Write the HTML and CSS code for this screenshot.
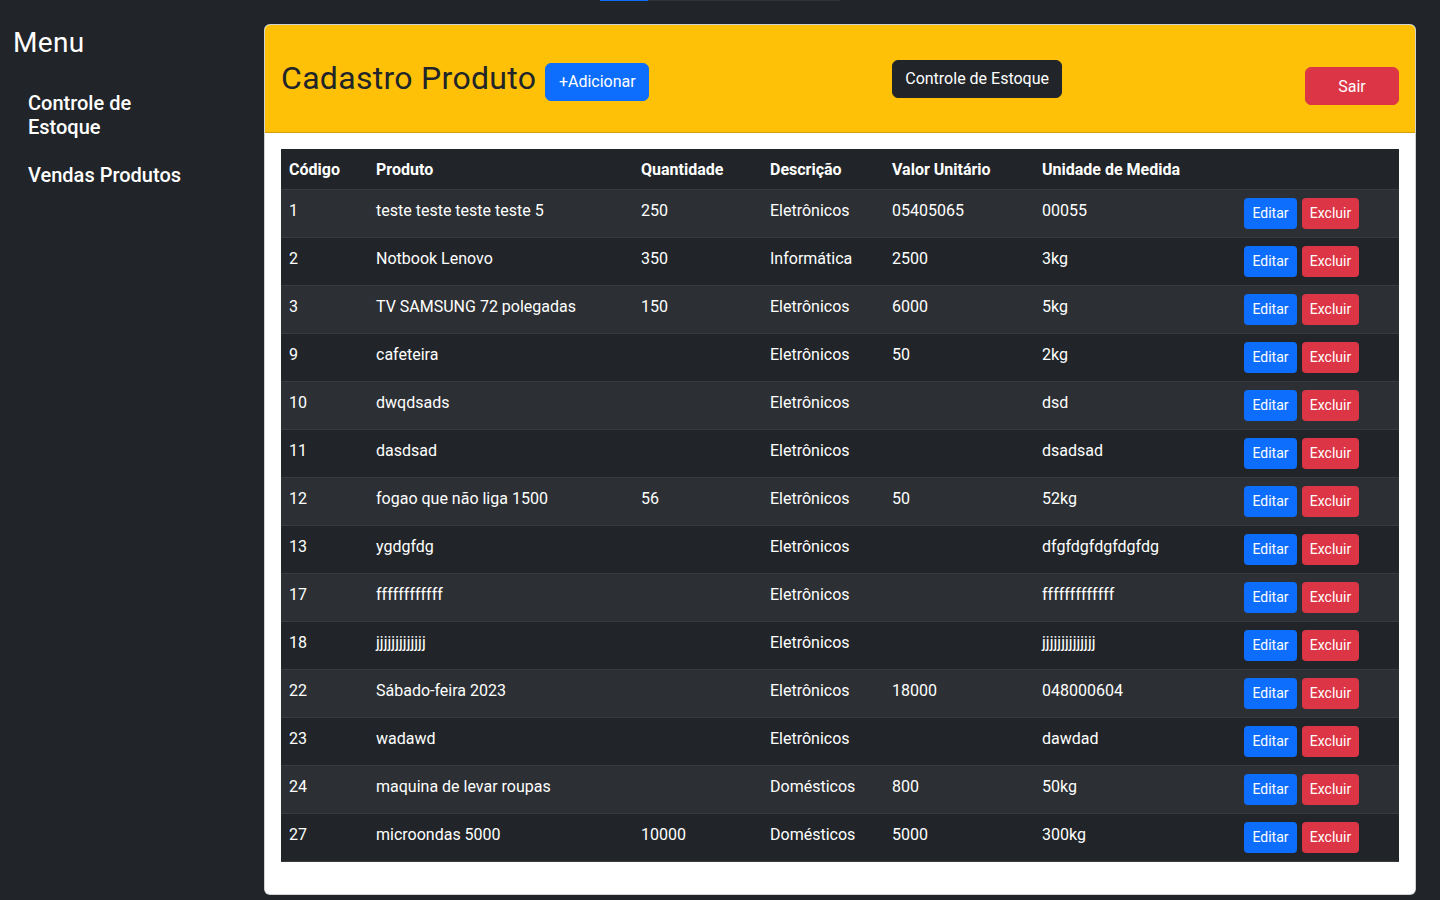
FILE: index.html
```html
<!DOCTYPE html>
<html lang="pt-BR">
<head>
<meta charset="utf-8">
<title>Cadastro Produto</title>
<link rel="stylesheet" href="styles.css">
</head>
<body>
<div class="topline"><span class="tl-blue"></span><span class="tl-grey"></span></div>
<div class="layout">
  <aside class="sidebar">
    <h3 class="menu-title">Menu</h3>
    <ul class="menu-list">
      <li><a class="menu-link" href="#">Controle de Estoque</a></li>
      <li><a class="menu-link" href="#">Vendas Produtos</a></li>
    </ul>
  </aside>
  <main class="main">
    <section class="card">
      <header class="card-header">
        <div class="title-group">
          <h2 class="page-title">Cadastro Produto</h2>
          <button class="btn btn-primary btn-add">+Adicionar</button>
        </div>
        <button class="btn btn-dark btn-stock">Controle de Estoque</button>
        <button class="btn btn-danger btn-exit">Sair</button>
      </header>
      <div class="card-body">
        <table class="table">
          <colgroup>
            <col class="c-cod"><col class="c-prod"><col class="c-qtd"><col class="c-desc"><col class="c-val"><col class="c-un"><col class="c-act">
          </colgroup>
          <thead>
            <tr><th>Código</th><th>Produto</th><th>Quantidade</th><th>Descrição</th><th>Valor Unitário</th><th>Unidade de Medida</th><th></th></tr>
          </thead>
          <tbody>
            <tr><td>1</td><td>teste teste teste teste 5</td><td>250</td><td>Eletrônicos</td><td>05405065</td><td>00055</td><td class="actions"><button class="btn-sm btn-primary btn-edit">Editar</button><button class="btn-sm btn-danger btn-del">Excluir</button></td></tr>
            <tr><td>2</td><td>Notbook Lenovo</td><td>350</td><td>Informática</td><td>2500</td><td>3kg</td><td class="actions"><button class="btn-sm btn-primary btn-edit">Editar</button><button class="btn-sm btn-danger btn-del">Excluir</button></td></tr>
            <tr><td>3</td><td>TV SAMSUNG 72 polegadas</td><td>150</td><td>Eletrônicos</td><td>6000</td><td>5kg</td><td class="actions"><button class="btn-sm btn-primary btn-edit">Editar</button><button class="btn-sm btn-danger btn-del">Excluir</button></td></tr>
            <tr><td>9</td><td>cafeteira</td><td></td><td>Eletrônicos</td><td>50</td><td>2kg</td><td class="actions"><button class="btn-sm btn-primary btn-edit">Editar</button><button class="btn-sm btn-danger btn-del">Excluir</button></td></tr>
            <tr><td>10</td><td>dwqdsads</td><td></td><td>Eletrônicos</td><td></td><td>dsd</td><td class="actions"><button class="btn-sm btn-primary btn-edit">Editar</button><button class="btn-sm btn-danger btn-del">Excluir</button></td></tr>
            <tr><td>11</td><td>dasdsad</td><td></td><td>Eletrônicos</td><td></td><td>dsadsad</td><td class="actions"><button class="btn-sm btn-primary btn-edit">Editar</button><button class="btn-sm btn-danger btn-del">Excluir</button></td></tr>
            <tr><td>12</td><td>fogao que não liga 1500</td><td>56</td><td>Eletrônicos</td><td>50</td><td>52kg</td><td class="actions"><button class="btn-sm btn-primary btn-edit">Editar</button><button class="btn-sm btn-danger btn-del">Excluir</button></td></tr>
            <tr><td>13</td><td>ygdgfdg</td><td></td><td>Eletrônicos</td><td></td><td>dfgfdgfdgfdgfdg</td><td class="actions"><button class="btn-sm btn-primary btn-edit">Editar</button><button class="btn-sm btn-danger btn-del">Excluir</button></td></tr>
            <tr><td>17</td><td>ffffffffffff</td><td></td><td>Eletrônicos</td><td></td><td>fffffffffffff</td><td class="actions"><button class="btn-sm btn-primary btn-edit">Editar</button><button class="btn-sm btn-danger btn-del">Excluir</button></td></tr>
            <tr><td>18</td><td>jjjjjjjjjjjjj</td><td></td><td>Eletrônicos</td><td></td><td>jjjjjjjjjjjjjj</td><td class="actions"><button class="btn-sm btn-primary btn-edit">Editar</button><button class="btn-sm btn-danger btn-del">Excluir</button></td></tr>
            <tr><td>22</td><td>Sábado-feira 2023</td><td></td><td>Eletrônicos</td><td>18000</td><td>048000604</td><td class="actions"><button class="btn-sm btn-primary btn-edit">Editar</button><button class="btn-sm btn-danger btn-del">Excluir</button></td></tr>
            <tr><td>23</td><td>wadawd</td><td></td><td>Eletrônicos</td><td></td><td>dawdad</td><td class="actions"><button class="btn-sm btn-primary btn-edit">Editar</button><button class="btn-sm btn-danger btn-del">Excluir</button></td></tr>
            <tr><td>24</td><td>maquina de levar roupas</td><td></td><td>Domésticos</td><td>800</td><td>50kg</td><td class="actions"><button class="btn-sm btn-primary btn-edit">Editar</button><button class="btn-sm btn-danger btn-del">Excluir</button></td></tr>
            <tr><td>27</td><td>microondas 5000</td><td>10000</td><td>Domésticos</td><td>5000</td><td>300kg</td><td class="actions"><button class="btn-sm btn-primary btn-edit">Editar</button><button class="btn-sm btn-danger btn-del">Excluir</button></td></tr>
          </tbody>
        </table>
      </div>
    </section>
  </main>
</div>
</body>
</html>
```

FILE: styles.css
```css
* { box-sizing: border-box; }

html, body {
  margin: 0;
  background: #212529;
}

body {
  font-family: Roboto, "Liberation Sans", sans-serif;
  font-size: 16px;
  line-height: 1.5;
  color: #fff;
  min-height: 900px;
}

.topline {
  display: flex;
  height: 1px;
  padding-left: 600px;
}
.tl-blue { width: 48px; background: #0d6efd; }
.tl-grey { width: 192px; background: #30353a; }

.layout {
  display: flex;
  align-items: flex-start;
}

/* Sidebar */
.sidebar {
  width: 264px;
  flex: 0 0 264px;
  padding: 25px 0 0 13px;
}
.menu-title {
  margin: 0;
  font-size: 28px;
  font-weight: 400;
  line-height: 1.2;
  letter-spacing: 0.3px;
  color: #fff;
}
.menu-list {
  list-style: none;
  margin: 31px 0 0;
  padding: 0 0 0 15px;
  width: 185px;
  display: flex;
  flex-direction: column;
  gap: 24px;
}
.menu-link {
  display: block;
  color: #fff;
  text-decoration: none;
  font-size: 20px;
  font-weight: 500;
  line-height: 24px;
}

/* Main */
.main {
  flex: 1;
  padding: 23px 24px 0 0;
}

.card {
  background: #fff;
  border: 1px solid rgba(0, 0, 0, 0.175);
  border-radius: 6px;
}

.card-header {
  height: 108px;
  background: #ffc107;
  border-bottom: 1px solid rgba(0, 0, 0, 0.175);
  border-radius: 5px 5px 0 0;
  padding: 35px 16px 0;
  display: flex;
  justify-content: space-between;
  align-items: flex-start;
}

.title-group {
  display: flex;
  align-items: flex-start;
  gap: 9px;
}

.page-title {
  margin: -1px 0 0;
  font-size: 32px;
  font-weight: 400;
  line-height: 1.2;
  letter-spacing: 0.3px;
  color: #212529;
}

.btn {
  font-family: inherit;
  font-size: 16px;
  line-height: 24px;
  padding: 6px 12px;
  border: 1px solid transparent;
  border-radius: 6px;
  color: #fff;
  cursor: pointer;
  text-align: center;
}

.btn-primary { background: #0d6efd; border-color: #0d6efd; color: #fff; }
.btn-dark { background: #212529; border-color: #212529; color: #fff; }
.btn-danger { background: #dc3545; border-color: #dc3545; color: #fff; }

.btn-add { margin-top: 3px; width: 104px; padding: 6px 0; }
.btn-stock { width: 170px; padding: 6px 0; }
.btn-exit { margin-top: 7px; width: 94px; padding: 7px 0 5px; }

.card-body {
  padding: 16px;
}

/* Table */
.table {
  width: 100%;
  border-collapse: collapse;
  table-layout: fixed;
  margin-bottom: 16px;
  background: #212529;
  color: #fff;
}

.c-cod { width: 87px; }
.c-prod { width: 265px; }
.c-qtd { width: 129px; }
.c-desc { width: 122px; }
.c-val { width: 150px; }
.c-un { width: 202px; }
.c-act { width: 163px; }

.table th,
.table td {
  padding: 9px 8px 7px;
  text-align: left;
  border-bottom: 1px solid #373b3e;
  white-space: nowrap;
  vertical-align: top;
}

.table th {
  font-weight: 700;
}

.table td {
  font-weight: 400;
}

.table tbody tr:nth-child(odd) td {
  background: #2c3034;
}

.table td.actions {
  padding: 8px;
}

.btn-sm {
  display: inline-block;
  vertical-align: top;
  font-family: inherit;
  font-size: 14px;
  line-height: 21px;
  padding: 4px 0;
  border: 1px solid transparent;
  border-radius: 4px;
  color: #fff;
  text-align: center;
  cursor: pointer;
}

.btn-edit { width: 53px; }
.btn-del { width: 57px; margin-left: 5px; }
```
